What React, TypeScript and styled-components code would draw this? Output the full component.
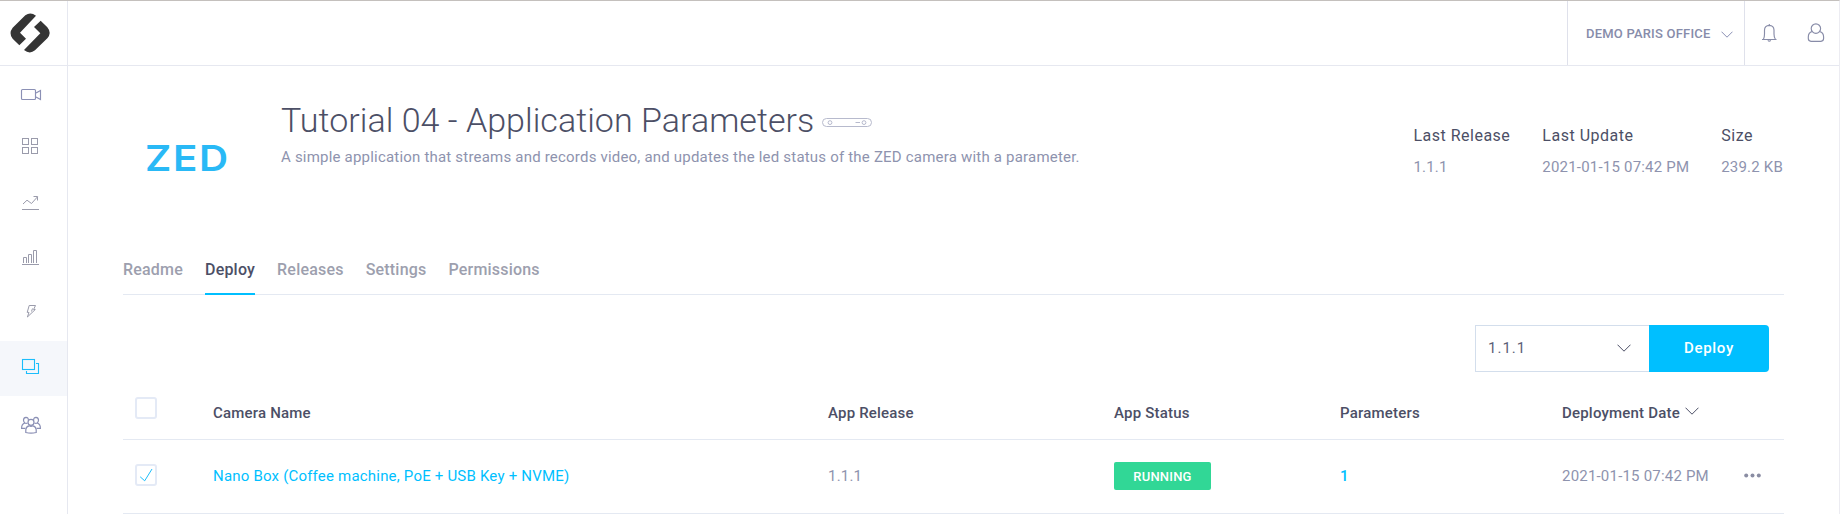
import React from "react";
import styled, { createGlobalStyle } from "styled-components";

const GlobalStyle = createGlobalStyle`
  *, *::before, *::after { box-sizing: border-box; }
  html, body { margin: 0; padding: 0; background: #fff; }
  body { font-family: Roboto, "Liberation Sans", sans-serif; color: #8e93ae; overflow: hidden; }
  svg { display: block; flex: none; }
`;

const Page = styled.div`
  display: flex;
  width: 1840px;
  height: 514px;
  border-top: 1px solid #c4c0bd;
  border-right: 1px solid #ececf2;
`;

const Sidebar = styled.nav`
  width: 68px;
  flex: none;
  border-right: 1px solid #e6e8f0;
`;

const LogoBox = styled.div`
  height: 65px;
  border-bottom: 1px solid #e6e8f0;
`;

const NavItem = styled.div<{ $active?: boolean }>`
  height: 55px;
  background: ${(p) => (p.$active ? "#f5f7fb" : "transparent")};
`;

const Main = styled.div`
  flex: 1;
  display: flex;
  flex-direction: column;
  min-width: 0;
`;

const TopBar = styled.header`
  display: flex;
  justify-content: flex-end;
  height: 65px;
  flex: none;
  border-bottom: 1px solid #e6e8f0;
`;

const Workspace = styled.div`
  display: flex;
  align-items: center;
  gap: 10px;
  width: 178px;
  padding: 1px 0 0 18px;
  border: solid #dfe1eb;
  border-width: 0 1px;
  font-size: 13px;
  font-weight: 500;
  line-height: 20px;
  letter-spacing: 0.2px;
  color: #878caa;
  white-space: nowrap;
`;

const TopIcons = styled.div`
  display: flex;
  width: 94px;
`;

const Content = styled.main`
  padding: 34px 55px 0 55px;
`;

const Hero = styled.section`
  display: flex;
  height: 158px;
`;

const Brand = styled.div`
  width: 158px;
  padding: 35px 0 0 21px;
  font-family: Inter, sans-serif;
  font-size: 36px;
  font-weight: 600;
  line-height: 46px;
  letter-spacing: 1.5px;
  color: #29b9f6;

  span {
    display: inline-block;
    transform: scaleX(1.12);
    transform-origin: left;
    margin-left: 1px;
  }
`;

const Intro = styled.div`
  flex: 1;
`;

const TitleRow = styled.div`
  display: flex;
  align-items: center;
  gap: 8px;
`;

const Title = styled.h1`
  margin: 0;
  font-size: 34px;
  font-weight: 300;
  line-height: 40px;
  letter-spacing: 0.04px;
  color: #4c4f66;
  white-space: nowrap;
`;

const TitleIcon = styled.svg`
  margin-top: 6px;
`;

const Subtitle = styled.p`
  margin: 7px 0 0;
  font-size: 15px;
  line-height: 20px;
  letter-spacing: 0.2px;
  color: #8e93ae;
`;

const Meta = styled.dl`
  display: flex;
  gap: 32px;
  margin: 26px 1px 0 0;
`;

const MetaLabel = styled.dt`
  font-size: 16px;
  line-height: 20px;
  letter-spacing: 0.5px;
  color: #4c4f66;
`;

const MetaValue = styled.dd`
  margin: 11px 0 0;
  font-size: 15px;
  line-height: 20px;
  letter-spacing: 0.2px;
  white-space: nowrap;
`;

const Tabs = styled.div`
  display: flex;
  gap: 22px;
  height: 37px;
  border-bottom: 1px solid #e4e9f2;
`;

const Tab = styled.div<{ $active?: boolean }>`
  height: 37px;
  padding-top: 2px;
  font-size: 16px;
  font-weight: 500;
  line-height: 20px;
  letter-spacing: 0.2px;
  color: ${(p) => (p.$active ? "#4c4f66" : "#9d9fae")};
  border-bottom: 2px solid ${(p) => (p.$active ? "#00bfff" : "transparent")};
`;

const Actions = styled.div`
  display: flex;
  justify-content: flex-end;
  padding: 30px 15px 0 0;
`;

const Select = styled.div`
  display: flex;
  align-items: center;
  justify-content: space-between;
  width: 174px;
  height: 47px;
  padding: 0 18px 2px 12px;
  border: 1px solid #d3deec;
  border-right: 0;
  font-size: 15px;
  letter-spacing: 1px;
  color: #5c5f78;
`;

const DeployButton = styled.button`
  width: 120px;
  height: 47px;
  padding: 0 0 2px;
  border: 0;
  border-radius: 0 4px 4px 0;
  background: #00bfff;
  color: #fff;
  font: 500 15px Roboto, sans-serif;
  letter-spacing: 0.7px;
`;

const Row = styled.div<{ $head?: boolean }>`
  display: grid;
  grid-template-columns: 90px 615px 286px 226px 222px 182px 40px;
  height: ${(p) => (p.$head ? "68px" : "74px")};
  padding-top: ${(p) => (p.$head ? "25px" : "24px")};
  border-bottom: 1px solid #e4e9f2;
`;

const Cell = styled.div<{ $tone?: "head" | "link" | "strong" }>`
  display: flex;
  align-items: flex-start;
  gap: 5px;
  padding-top: ${(p) => (p.$tone === "head" ? "6px" : "2px")};
  font-size: 15px;
  line-height: 20px;
  letter-spacing: 0.2px;
  font-weight: ${(p) => (p.$tone === "head" || p.$tone === "strong" ? 500 : 400)};
  color: ${(p) => (p.$tone === "head" ? "#4c4f66" : p.$tone ? "#00bfff" : "#8e93ae")};
  white-space: nowrap;
`;

const Checkbox = styled.div`
  width: 22px;
  height: 22px;
  margin-left: 12px;
  border: 2px solid #e4eaf6;
  border-radius: 3px;
`;

const StatusCell = styled.div`
  margin-top: -2px;
`;

const Badge = styled.div`
  width: 97px;
  height: 28px;
  border-radius: 2px;
  background: #31d796;
  color: #fff;
  font-size: 13px;
  font-weight: 500;
  line-height: 29px;
  letter-spacing: 0.2px;
  text-align: center;
`;

const stroke = (color: string, width = 1) => ({ fill: "none", stroke: color, strokeWidth: width });
const GREY = "#9a9bab";
const SLATE = "#8b90b5";

const Chevron = ({ w = 14, h = 8, color = "#4c4f66", top = 0 }: { w?: number; h?: number; color?: string; top?: number }) => (
  <svg width={w} height={h + top} viewBox={`0 ${-top} ${w} ${h + top}`} {...stroke(color)}>
    <path d={`M.5 .7L${w / 2} ${h - 0.8}L${w - 0.5} .7`} />
  </svg>
);

const navIcons: { key: string; art: React.ReactNode }[] = [
  {
    key: "cameras",
    art: (
      <g {...stroke(SLATE, 1.15)}>
        <rect x="21.5" y="23.5" width="14" height="10" rx="1" />
        <path d="M36 27L40.5 24.5V33.5L36 31" />
      </g>
    ),
  },
  {
    key: "dashboard",
    art: (
      <g {...stroke(GREY)}>
        <rect x="22.5" y="17.5" width="6" height="6" />
        <rect x="31.5" y="17.5" width="6" height="6" />
        <rect x="22.5" y="26.5" width="6" height="6" />
        <rect x="31.5" y="26.5" width="6" height="6" />
      </g>
    ),
  },
  {
    key: "trends",
    art: (
      <g {...stroke(GREY)}>
        <path d="M22 33.5H39M23 28L27 24.2L31.5 27.5L37.5 20.8M33.5 20.5H37.5V24.5" />
      </g>
    ),
  },
  {
    key: "stats",
    art: (
      <g {...stroke(GREY)}>
        <path d="M22 33.5H39M23.5 32V26.5H26.5V32M28.5 32V23.5H31.5V32M33.5 32V19.5H36.5V32" />
      </g>
    ),
  },
  {
    key: "events",
    art: (
      <g {...stroke(GREY)} strokeLinejoin="round">
        <path d="M29.2 19.5H35.5L33.6 23.5H35.3L27.4 31L29 26.4H27.2Z" />
        <path d="M32.5 22.5L31.5 25.5" />
      </g>
    ),
  },
  {
    key: "apps",
    art: (
      <g {...stroke("#1cbdfb", 1.1)}>
        <rect x="22.5" y="18.5" width="12" height="10" />
        <path d="M36 22.5H38.5V32.5H26.5V30" />
      </g>
    ),
  },
  {
    key: "users",
    art: (
      <g {...stroke(SLATE, 1.2)}>
        <circle cx="31" cy="26.3" r="3" />
        <path d="M25.8 36.5V33.7Q26 30.5 29 29.8Q31 31 33 29.8Q36 30.5 36.2 33.7V36.5Q31 37.6 25.8 36.5Z" />
        <path d="M28.4 24.4Q28.5 21.3 26 21.3Q23.4 21.5 23.5 24.3Q23.6 26 24.8 27Q21.5 28 21.6 32.4H25.3M24.8 27Q26 27.7 27.6 27" />
        <path d="M33.6 24.4Q33.5 21.3 36 21.3Q38.6 21.5 38.5 24.3Q38.4 26 37.2 27Q40.5 28 40.4 32.4H36.7M37.2 27Q36 27.7 34.4 27" />
      </g>
    ),
  },
];

export default function App() {
  return (
    <>
      <GlobalStyle />
      <Page>
        <Sidebar>
          <LogoBox>
            <svg width="67" height="64" viewBox="0 3 201 192" fill="#353535">
              <path d="M108 47L60 98L78 116L58 136L38 116Q25 100 38 83L76 46Q91 34 108 47Z" />
              <path d="M122 62L142 82Q156 99 142 115L105 151Q89 164 72 150L121 100L102 81Z" />
            </svg>
          </LogoBox>
          {navIcons.map(({ key, art }) => (
            <NavItem key={key} $active={key === "apps"}>
              <svg width="67" height="55" viewBox="0 0 67 55">
                {art}
              </svg>
            </NavItem>
          ))}
        </Sidebar>
        <Main>
          <TopBar>
            <Workspace>
              DEMO PARIS OFFICE
              <Chevron w={12} h={7} color={SLATE} top={1} />
            </Workspace>
            <TopIcons>
              <svg width="94" height="64" viewBox="0 0 94 64" {...stroke("#888ca8", 1.15)}>
                <path d="M17 38.5H31.5M18.5 38Q19.5 36 19.5 33V29Q19.7 24.6 24.3 24.4Q28.8 24.6 29 29V33Q29 36 30.3 38M24.3 24.4V23M22.8 39.3Q24.3 40.8 25.8 39.3" />
                <circle cx="70.9" cy="27.6" r="4.7" />
                <path d="M67.2 30.5Q63.3 31.6 63.3 36V37.6Q63.4 40.2 66 40.4H76Q78.5 40.2 78.6 37.6V36Q78.6 31.6 74.6 30.5" />
              </svg>
            </TopIcons>
          </TopBar>
          <Content>
            <Hero>
              <Brand>
                <span>ZED</span>
              </Brand>
              <Intro>
                <TitleRow>
                  <Title>Tutorial 04 - Application Parameters</Title>
                  <TitleIcon width="51" height="10" viewBox="0 0 51 10" {...stroke("#b7bacd")}>
                    <rect x=".5" y=".5" width="49" height="8" rx="4" />
                    <circle cx="8" cy="4.6" r="1.9" />
                    <circle cx="42" cy="4.6" r="1.9" />
                    <path d="M33.5 4.5H38" />
                  </TitleIcon>
                </TitleRow>
                <Subtitle>
                  A simple application that streams and records video, and updates the led status of the ZED camera with a parameter.
                </Subtitle>
              </Intro>
              <Meta>
                <div>
                  <MetaLabel>Last Release</MetaLabel>
                  <MetaValue>1.1.1</MetaValue>
                </div>
                <div>
                  <MetaLabel>Last Update</MetaLabel>
                  <MetaValue>2021-01-15 07:42 PM</MetaValue>
                </div>
                <div>
                  <MetaLabel>Size</MetaLabel>
                  <MetaValue>239.2 KB</MetaValue>
                </div>
              </Meta>
            </Hero>
            <Tabs>
              <Tab>Readme</Tab>
              <Tab $active>Deploy</Tab>
              <Tab>Releases</Tab>
              <Tab>Settings</Tab>
              <Tab>Permissions</Tab>
            </Tabs>
            <Actions>
              <Select>
                1.1.1
                <Chevron />
              </Select>
              <DeployButton>Deploy</DeployButton>
            </Actions>
            <Row $head>
              <div>
                <Checkbox />
              </div>
              <Cell $tone="head">Camera Name</Cell>
              <Cell $tone="head">App Release</Cell>
              <Cell $tone="head">App Status</Cell>
              <Cell $tone="head">Parameters</Cell>
              <Cell $tone="head">
                Deployment Date
                <Chevron top={4} />
              </Cell>
            </Row>
            <Row>
              <div>
                <Checkbox>
                  <svg width="18" height="18" viewBox="0 0 18 18" {...stroke("#1cbdfb")}>
                    <path d="M3.2 10.8L7.7 14.8L15 3" />
                  </svg>
                </Checkbox>
              </div>
              <Cell $tone="link">Nano Box (Coffee machine, PoE + USB Key + NVME)</Cell>
              <Cell>1.1.1</Cell>
              <StatusCell>
                <Badge>RUNNING</Badge>
              </StatusCell>
              <Cell $tone="strong">1</Cell>
              <Cell>2021-01-15 07:42 PM</Cell>
              <Cell>
                <svg width="18" height="20" viewBox="0 0 18 20" fill="#8a8da3">
                  <circle cx="2.2" cy="9.6" r="2" />
                  <circle cx="8.5" cy="9.6" r="2" />
                  <circle cx="14.8" cy="9.6" r="2" />
                </svg>
              </Cell>
            </Row>
          </Content>
        </Main>
      </Page>
    </>
  );
}
